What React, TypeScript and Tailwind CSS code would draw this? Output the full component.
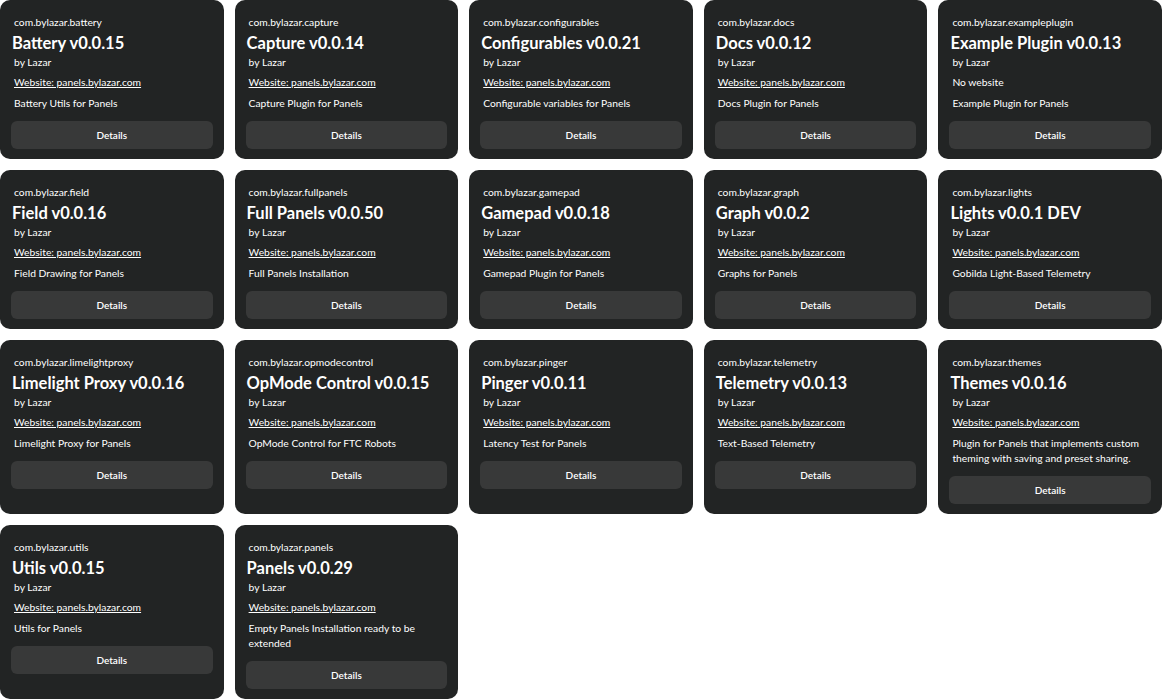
const plugins = [
  { id: "com.bylazar.battery", name: "Battery", version: "v0.0.15", website: true, desc: "Battery Utils for Panels" },
  { id: "com.bylazar.capture", name: "Capture", version: "v0.0.14", website: true, desc: "Capture Plugin for Panels" },
  { id: "com.bylazar.configurables", name: "Configurables", version: "v0.0.21", website: true, desc: "Configurable variables for Panels" },
  { id: "com.bylazar.docs", name: "Docs", version: "v0.0.12", website: true, desc: "Docs Plugin for Panels" },
  { id: "com.bylazar.exampleplugin", name: "Example Plugin", version: "v0.0.13", website: false, desc: "Example Plugin for Panels" },
  { id: "com.bylazar.field", name: "Field", version: "v0.0.16", website: true, desc: "Field Drawing for Panels" },
  { id: "com.bylazar.fullpanels", name: "Full Panels", version: "v0.0.50", website: true, desc: "Full Panels Installation" },
  { id: "com.bylazar.gamepad", name: "Gamepad", version: "v0.0.18", website: true, desc: "Gamepad Plugin for Panels" },
  { id: "com.bylazar.graph", name: "Graph", version: "v0.0.2", website: true, desc: "Graphs for Panels" },
  { id: "com.bylazar.lights", name: "Lights", version: "v0.0.1 DEV", website: true, desc: "Gobilda Light-Based Telemetry" },
  { id: "com.bylazar.limelightproxy", name: "Limelight Proxy", version: "v0.0.16", website: true, desc: "Limelight Proxy for Panels" },
  { id: "com.bylazar.opmodecontrol", name: "OpMode Control", version: "v0.0.15", website: true, desc: "OpMode Control for FTC Robots" },
  { id: "com.bylazar.pinger", name: "Pinger", version: "v0.0.11", website: true, desc: "Latency Test for Panels" },
  { id: "com.bylazar.telemetry", name: "Telemetry", version: "v0.0.13", website: true, desc: "Text-Based Telemetry" },
  { id: "com.bylazar.themes", name: "Themes", version: "v0.0.16", website: true, desc: "Plugin for Panels that implements custom theming with saving and preset sharing." },
  { id: "com.bylazar.utils", name: "Utils", version: "v0.0.15", website: true, desc: "Utils for Panels" },
  { id: "com.bylazar.panels", name: "Panels", version: "v0.0.29", website: true, desc: "Empty Panels Installation ready to be extended" },
];

type Plugin = (typeof plugins)[number];

function PluginCard({ plugin }: { plugin: Plugin }) {
  return (
    <div className="flex flex-col rounded-[10px] bg-[#222424] px-[11px] pb-[10px] pt-[14px] text-white">
      <p className="px-[3px] text-[10.3px] leading-[16px]">{plugin.id}</p>
      <h3 className="mt-[2px] px-[1px] text-[16.5px] font-bold leading-[22px]">
        {plugin.name} {plugin.version}
      </h3>
      <p className="mt-[1px] px-[3px] text-[10.3px] leading-[15px]">by Lazar</p>
      {plugin.website ? (
        <a className="mt-[5px] px-[3px] text-[10.3px] leading-[15px] underline" href="#">
          Website: panels.bylazar.com
        </a>
      ) : (
        <p className="mt-[5px] px-[3px] text-[10.3px] leading-[15px]">No website</p>
      )}
      <p className="mt-[6px] px-[3px] text-[10.3px] leading-[15px]">{plugin.desc}</p>
      <button
        type="button"
        className="mt-[10px] h-[28px] w-full rounded-[6px] bg-[#383939] text-[10px] font-semibold text-white"
      >
        Details
      </button>
    </div>
  );
}

export default function App() {
  return (
    <div className="min-h-screen bg-white font-['Lato',sans-serif]">
      <div className="grid grid-cols-5 items-stretch gap-x-[11px] gap-y-[11px]">
        {plugins.map((plugin) => (
          <PluginCard key={plugin.id} plugin={plugin} />
        ))}
      </div>
    </div>
  );
}
